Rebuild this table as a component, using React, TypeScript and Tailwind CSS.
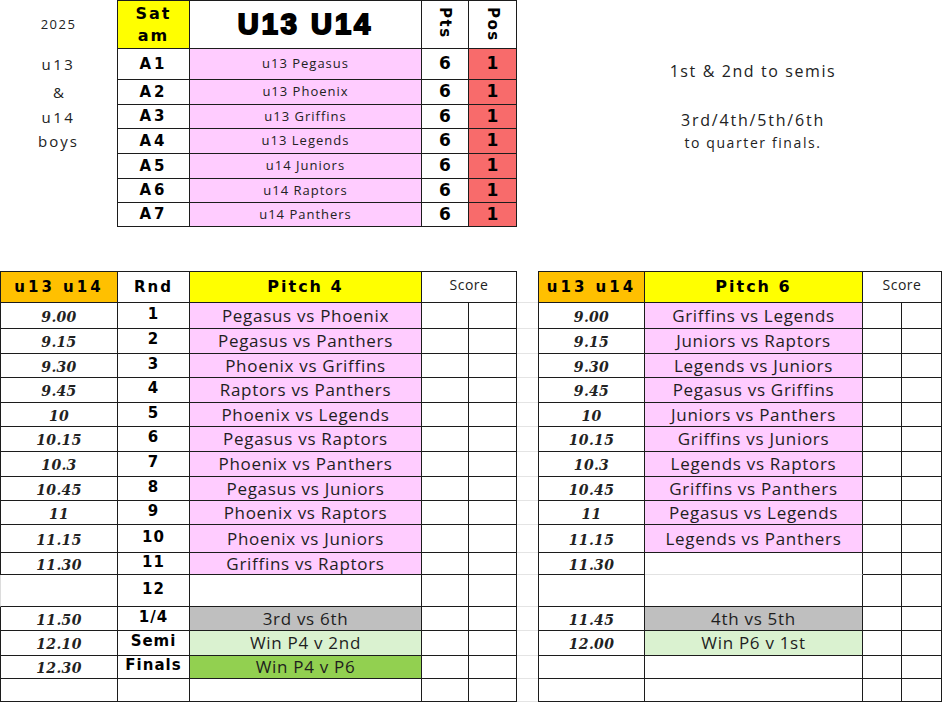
const sans = "font-['Open_Sans','Liberation_Sans',sans-serif]";
const heavy = "font-['DejaVu_Sans',sans-serif] font-bold";
const serif = "font-['DejaVu_Serif',serif] italic font-bold";
const line = "border-[#1c1c1c]";

const fills = {
  pink: "bg-[#ffccff]",
  white: "bg-white",
  gray: "bg-[#bfbfbf]",
  mint: "bg-[#daf2d0]",
  green: "bg-[#92d050]",
};
type Fill = keyof typeof fills;

const teams = [
  ["A1", "u13 Pegasus"],
  ["A2", "u13 Phoenix"],
  ["A3", "u13 Griffins"],
  ["A4", "u13 Legends"],
  ["A5", "u14 Juniors"],
  ["A6", "u14 Raptors"],
  ["A7", "u14 Panthers"],
];

type Row = {
  t4: string;
  rnd: string;
  m4: string;
  f4: Fill;
  t6: string;
  m6: string;
  f6: Fill;
};

const rows: Row[] = [
  { t4: "9.00", rnd: "1", m4: "Pegasus vs Phoenix", f4: "pink", t6: "9.00", m6: "Griffins vs Legends", f6: "pink" },
  { t4: "9.15", rnd: "2", m4: "Pegasus vs Panthers", f4: "pink", t6: "9.15", m6: "Juniors vs Raptors", f6: "pink" },
  { t4: "9.30", rnd: "3", m4: "Phoenix vs Griffins", f4: "pink", t6: "9.30", m6: "Legends vs Juniors", f6: "pink" },
  { t4: "9.45", rnd: "4", m4: "Raptors vs Panthers", f4: "pink", t6: "9.45", m6: "Pegasus vs Griffins", f6: "pink" },
  { t4: "10", rnd: "5", m4: "Phoenix vs Legends", f4: "pink", t6: "10", m6: "Juniors vs Panthers", f6: "pink" },
  { t4: "10.15", rnd: "6", m4: "Pegasus vs Raptors", f4: "pink", t6: "10.15", m6: "Griffins vs Juniors", f6: "pink" },
  { t4: "10.3", rnd: "7", m4: "Phoenix vs Panthers", f4: "pink", t6: "10.3", m6: "Legends vs Raptors", f6: "pink" },
  { t4: "10.45", rnd: "8", m4: "Pegasus vs Juniors", f4: "pink", t6: "10.45", m6: "Griffins vs Panthers", f6: "pink" },
  { t4: "11", rnd: "9", m4: "Phoenix vs Raptors", f4: "pink", t6: "11", m6: "Pegasus vs Legends", f6: "pink" },
  { t4: "11.15", rnd: "10", m4: "Phoenix vs Juniors", f4: "pink", t6: "11.15", m6: "Legends vs Panthers", f6: "pink" },
  { t4: "11.30", rnd: "11", m4: "Griffins vs Raptors", f4: "pink", t6: "11.30", m6: "", f6: "white" },
  { t4: "", rnd: "12", m4: "", f4: "white", t6: "", m6: "", f6: "white" },
  { t4: "11.50", rnd: "1/4", m4: "3rd vs 6th", f4: "gray", t6: "11.45", m6: "4th vs 5th", f6: "gray" },
  { t4: "12.10", rnd: "Semi", m4: "Win P4 v 2nd", f4: "mint", t6: "12.00", m6: "Win P6 v 1st", f6: "mint" },
  { t4: "12.30", rnd: "Finals", m4: "Win P4 v P6", f4: "green", t6: "", m6: "", f6: "white" },
  { t4: "", rnd: "", m4: "", f4: "white", t6: "", m6: "", f6: "white" },
];

const rowTemplate =
  "grid-rows-[32px_26px_25px_24px_25px_24px_25px_25px_24px_24px_28px_22px_32px_24px_25px_23px_23px]";

const cell = `flex items-center justify-center border-r border-b ${line}`;

function PitchTable({ side }: { side: 4 | 6 }) {
  const left = side === 4;
  return (
    <div
      className={`grid ${rowTemplate} ${
        left ? "w-[517px] grid-cols-[118px_72px_232px_47px_48px]" : "w-[404px] grid-cols-[107px_218px_39px_40px]"
      }`}
    >
      <div className={`${cell} border-l border-t bg-[#ffc000] ${heavy} text-[15px] tracking-[3px]`}>u13 u14</div>
      {left && <div className={`${cell} border-t ${heavy} text-[15px] tracking-[2px]`}>Rnd</div>}
      <div className={`${cell} border-t bg-[#ffff00] ${heavy} text-[16px] tracking-[2px]`}>Pitch {side}</div>
      <div className={`col-span-2 flex justify-center border-r border-b border-t ${line} pt-[2px] ${sans} text-[14px] tracking-[0.5px] text-[#222]`}>
        Score
      </div>

      {rows.map((r, i) => {
        const time = left ? r.t4 : r.t6;
        const match = left ? r.m4 : r.m6;
        const fill = left ? r.f4 : r.f6;
        const openLeft = left && i === 11;
        const openBottom = !left && i === 10;
        return [
          <div
            key={`t${i}`}
            className={`${cell} border-l ${openLeft ? "border-l-[#dcdcdc]" : ""} pt-[3px] ${serif} text-[14px] tracking-[0.3px] text-[#222]`}
          >
            {time}
          </div>,
          left && (
            <div key={`r${i}`} className={`${cell} pb-[3px] ${heavy} text-[15px] tracking-[1px]`}>
              {r.rnd}
            </div>
          ),
          <div
            key={`m${i}`}
            className={`${cell} ${openBottom ? "border-b-[#e2e2e2]" : ""} ${fills[fill]} ${sans} text-[17px] tracking-[0.7px] text-[#1e1e1e]`}
          >
            {match}
          </div>,
          <div key={`a${i}`} className={cell} />,
          <div key={`b${i}`} className={cell} />,
        ];
      })}
    </div>
  );
}

function GapColumn() {
  return (
    <div className={`grid w-[21px] ${rowTemplate}`}>
      {Array.from({ length: rows.length + 1 }).map((_, i) => (
        <div key={i} className="border-b border-[#e4e4e4]" />
      ))}
    </div>
  );
}

export default function App() {
  return (
    <div className="h-[704px] w-[945px] overflow-hidden bg-white text-black">
      <div className="flex h-[227px]">
        <div
          className={`grid w-[117px] grid-rows-[49px_31px_25px_24px_25px] text-center ${sans} text-[#222]`}
        >
          <div className="flex items-center justify-center text-[13px] tracking-[1.5px]">2025</div>
          <div className="flex items-center justify-center text-[15px] tracking-[2.5px]">u13</div>
          <div className="flex items-center justify-center text-[15px]">&amp;</div>
          <div className="flex items-center justify-center text-[15px] tracking-[2.5px]">u14</div>
          <div className="flex items-center justify-center text-[15px] tracking-[2px]">boys</div>
        </div>

        <div className="grid w-[400px] grid-cols-[73px_232px_47px_48px] grid-rows-[49px_31px_25px_24px_25px_25px_24px_24px]">
          <div className={`${cell} flex-col border-l border-t bg-[#ffff00] ${heavy} text-[16px] leading-[22px] tracking-[2px]`}>
            <span>Sat</span>
            <span>am</span>
          </div>
          <div
            className={`${cell} border-t font-['Liberation_Sans',sans-serif] text-[29px] font-bold tracking-[3px] [-webkit-text-stroke:2px_black]`}
          >
            U13 U14
          </div>
          <div className={`flex justify-center border-r border-b border-t ${line} pt-[6px]`}>
            <span className={`${heavy} text-[15px] tracking-[1.5px] [writing-mode:vertical-rl]`}>Pts</span>
          </div>
          <div className={`flex justify-center border-r border-b border-t ${line} pt-[6px]`}>
            <span className={`${heavy} text-[15px] tracking-[1.5px] [writing-mode:vertical-rl]`}>Pos</span>
          </div>

          {teams.map(([code, name]) => [
            <div key={code} className={`${cell} border-l ${heavy} text-[15px] tracking-[3px]`}>
              {code}
            </div>,
            <div key={`${code}n`} className={`${cell} bg-[#ffccff] ${sans} text-[13px] tracking-[1px] text-[#222]`}>
              {name}
            </div>,
            <div key={`${code}p`} className={`${cell} ${heavy} text-[17px]`}>
              6
            </div>,
            <div key={`${code}o`} className={`${cell} bg-[#f86b6b] ${heavy} text-[17px]`}>
              1
            </div>,
          ])}
        </div>

        <div className={`ml-[123px] flex w-[226px] flex-col items-center pt-[59px] ${sans} text-[#222]`}>
          <div className="h-[22px] text-[16px] tracking-[1.6px]">1st &amp; 2nd to semis</div>
          <div className="mt-[27px] h-[22px] text-[16px] tracking-[1.8px]">3rd/4th/5th/6th</div>
          <div className="h-[24px] pt-[2px] text-[14px] tracking-[1.6px]">to quarter finals.</div>
        </div>
      </div>

      <div className="mt-[44px] flex">
        <PitchTable side={4} />
        <GapColumn />
        <PitchTable side={6} />
      </div>
    </div>
  );
}
